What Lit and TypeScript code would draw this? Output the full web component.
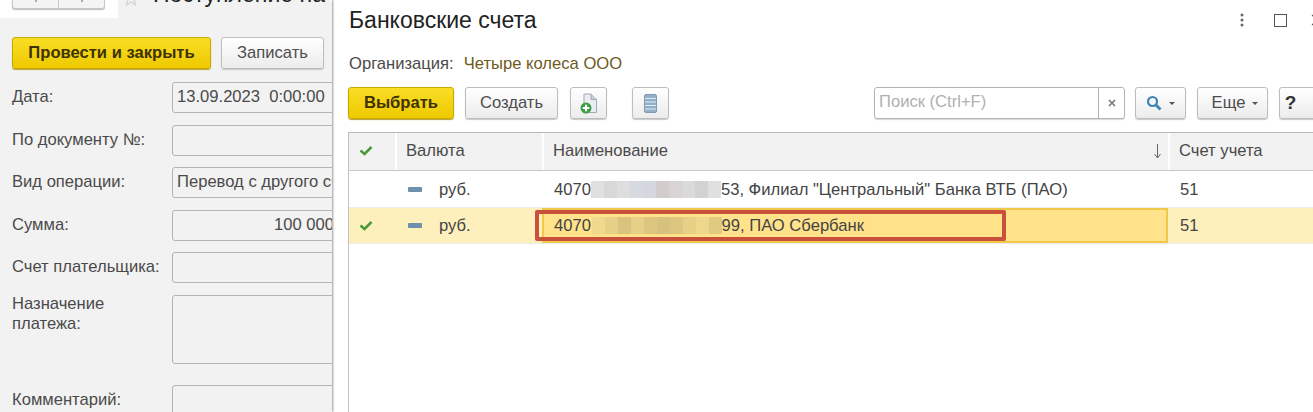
import { LitElement, html, css } from "lit";
import { customElement } from "lit/decorators.js";

const check = (color: string) => html`<svg width="14" height="11" viewBox="0 0 14 11"><path d="M1.5 5.5 L5.5 9 L12.5 2" fill="none" stroke=${color} stroke-width="2.6"/></svg>`;
const dash = html`<span class="dash"></span>`;

const blurOne = ["#e0e0e0", "#d8d8d8", "#dedede", "#d6dae0", "#d4d8de", "#d2cccc", "#d8d4d4", "#dadada", "#d2d2d2", "#e0e0e0"];
const blurTwo = ["#f0d88c", "#e6d088", "#d8c47e", "#e6cf86", "#dcc680", "#d6c27c", "#dcc680", "#e6d086", "#eed68a", "#e0ca82"];

@customElement("app-root")
export class AppRoot extends LitElement {
  static styles = css`
    :host {
      display: block;
      height: 412px;
      width: 1313px;
      overflow: hidden;
      font-family: "Liberation Sans", Arial, sans-serif;
      font-size: 16.6px;
      color: #4a4a4a;
    }
    .page { display: flex; height: 412px; }

    .left {
      width: 332px;
      flex: none;
      background: #f2f2f2;
      overflow: hidden;
      position: relative;
      z-index: 1;
      box-shadow: 1px 0 2px #999;
    }
    .doc-top { display: flex; height: 18px; }
    .nav-box { width: 118px; height: 18px; background: #fff; padding-left: 12px; box-sizing: border-box; flex: none; }
    .nav {
      width: 91px; height: 8px; display: flex;
      border: 1px solid #c8c8c8; border-top: none; border-radius: 0 0 3px 3px;
      background: #f4f4f4; box-shadow: 0 1px 1px #bbb;
    }
    .nav span { flex: 1; display: flex; justify-content: center; }
    .nav span + span { border-left: 1px solid #c8c8c8; }
    .nav i { width: 2px; height: 2px; background: #aaa; }
    .star { margin: -10px 0 0 5px; flex: none; }
    .doc-title {
      font-size: 23px; line-height: 24px; color: #222; white-space: nowrap;
      margin: -18px 0 0 14px;
    }
    .doc-actions { display: flex; gap: 10px; padding: 19px 0 0 12px; }

    .btn {
      box-sizing: border-box; height: 32px; display: flex; align-items: center; justify-content: center;
      border: 1px solid #bdbdbd; border-radius: 3px; color: #4d4d4d; flex: none;
      background: linear-gradient(#fff, #ececec); box-shadow: 0 1px 1px #c8c8c8;
    }
    .primary {
      background: linear-gradient(#f9de26, #eec900); border-color: #c9a900; color: #3d3300;
      font-weight: 700; box-shadow: 0 1px 1px #b8a030;
    }

    .form {
      display: grid; grid-template-columns: 160px 1fr; row-gap: 11.5px;
      padding: 13px 0 0 12px;
    }
    .label { line-height: 29px; white-space: nowrap; }
    .label.multi { line-height: 20px; margin-top: -1px; }
    .field {
      box-sizing: border-box; height: 31px; width: 190px; border: 1px solid #b4b4b4; border-radius: 3px;
      padding: 0 4px; line-height: 27px; white-space: nowrap; overflow: hidden; background: #f2f2f2;
    }
    .field.tall { height: 69px; margin-bottom: 10px; }
    .field.num { padding-left: 101px; }

    .right { flex: 1; background: #fff; position: relative; min-width: 0; }
    .head { display: flex; align-items: center; height: 40px; padding-left: 17px; }
    .title { font-size: 23px; color: #222; flex: 1; }
    .win { display: flex; align-items: center; width: 73px; flex: none; }
    .win svg { flex: none; }
    .org { display: flex; gap: 10px; padding: 14px 0 0 17px; height: 47px; box-sizing: border-box; line-height: 19px; }
    .org b { font-weight: 400; color: #6f5a1c; }

    .toolbar { display: flex; padding-left: 16px; height: 32px; width: 1000px; }
    .search {
      width: 251px; height: 32px; box-sizing: border-box; margin-left: 205px; display: flex; flex: none;
      border: 1px solid #b4b4b4; border-radius: 3px; box-shadow: 0 1px 1px #d8d8d8;
    }
    .search .hint { flex: 1; color: #b0b0b0; padding-left: 4px; line-height: 28px; }
    .search .clear { width: 25px; border-left: 1px solid #b4b4b4; display: flex; align-items: center; justify-content: center; }
    .caret { width: 0; height: 0; border: 3px solid transparent; border-top-color: #555; border-bottom: none; margin-left: 7px; }

    .table { margin: 13px 0 0 16px; border-left: 1px solid #c2c2c2; height: 300px; }
    .row { display: grid; grid-template-columns: 46px 147px 626px 1fr; box-sizing: border-box; }
    .row > div { display: flex; align-items: center; box-sizing: border-box; padding-left: 12px; }
    .row > .mark-col { padding-left: 10px; }
    .hdr { height: 39px; background: #f2f2f2; border-top: 1px solid #b9b9b9; border-bottom: 1px solid #c8c8c8; }
    .hdr > div { padding-bottom: 2px; }
    .hdr > div + div { border-left: 2px solid #fff; padding-left: 9px; }
    .hdr .sort { justify-content: space-between; padding-right: 6px; }
    .data { height: 37px; border-bottom: 1px solid #ececec; color: #444; }
    .data.first > div { padding-top: 1px; }
    .data.sel { background: #fdf0bc; height: 36px; }
    .data .cur { padding-left: 13px; gap: 17px; }
    .data .cell-sel { background: #ffe28a; border: 2px solid #f0c84a; padding-left: 10px; }
    .dash { width: 14px; height: 5px; background: #6d90ad; border-radius: 1px; display: block; }
    .blur { display: flex; height: 17px; width: 130px; flex: none; }
    .blur.short { width: 130px; margin-left: -4px; }
    .blur i { flex: 1; }
    .acct { white-space: pre; }

    .mark {
      position: absolute; left: 203px; top: 210px; width: 471px; height: 31px;
      box-sizing: border-box; border: 4px solid #c9503a; border-radius: 2px; pointer-events: none;
    }
  `;

  private blur(colors: string[], cls = "") {
    return html`<span class="blur ${cls}">${colors.map((c) => html`<i style="background:${c}"></i>`)}</span>`;
  }

  render() {
    return html`
      <div class="page">
        <section class="left">
          <div class="doc-top">
            <div class="nav-box"><div class="nav"><span><i></i></span><span><i></i></span></div></div>
            <svg class="star" width="16" height="16" viewBox="0 0 16 16"><path d="M8 1 L10 6 L15 6.4 L11.2 9.6 L12.4 15 L8 12 L3.6 15 L4.8 9.6 L1 6.4 L6 6 Z" fill="none" stroke="#d6d6d6" stroke-width="1.4"/></svg>
            <div class="doc-title">Поступление на</div>
          </div>
          <div class="doc-actions">
            <div class="btn primary" style="width:199px">Провести и закрыть</div>
            <div class="btn" style="width:103px">Записать</div>
          </div>
          <div class="form">
            <div class="label">Дата:</div><div class="field">13.09.2023&nbsp; 0:00:00</div>
            <div class="label">По документу №:</div><div class="field"></div>
            <div class="label">Вид операции:</div><div class="field">Перевод с другого счета</div>
            <div class="label">Сумма:</div><div class="field num">100 000,00</div>
            <div class="label">Счет плательщика:</div><div class="field"></div>
            <div class="label multi">Назначение<br />платежа:</div><div class="field tall"></div>
            <div class="label">Комментарий:</div><div class="field"></div>
          </div>
        </section>

        <section class="right">
          <div class="head">
            <div class="title">Банковские счета</div>
            <div class="win">
              <svg width="4" height="14" viewBox="0 0 4 14" fill="#666"><circle cx="2" cy="2" r="1.5"/><circle cx="2" cy="7" r="1.5"/><circle cx="2" cy="12" r="1.5"/></svg>
              <svg style="margin-left:30px" width="13" height="13" viewBox="0 0 13 13"><rect x=".5" y=".5" width="12" height="12" fill="none" stroke="#555"/></svg>
              <svg style="margin-left:24px" width="12" height="12" viewBox="0 0 12 12"><path d="M1 1 L11 11 M11 1 L1 11" stroke="#555" stroke-width="1.1"/></svg>
            </div>
          </div>
          <div class="org"><span>Организация:</span><b>Четыре колеса ООО</b></div>
          <div class="toolbar">
            <div class="btn primary" style="width:106px">Выбрать</div>
            <div class="btn" style="width:93px;margin-left:11px">Создать</div>
            <div class="btn" style="width:37px;margin-left:12px">
              <svg width="18" height="21" viewBox="0 0 18 21"><path d="M4 1 H11 L16.5 6.5 V19.5 H4 Z" fill="#e9edf0" stroke="#a0aab4"/><path d="M11 1 V6.5 H16.5" fill="#c6ced6" stroke="#a0aab4"/><circle cx="6" cy="15" r="5.5" fill="#3f9f45"/><path d="M6 11.7 V18.3 M2.7 15 H9.3" stroke="#fff" stroke-width="2"/></svg>
            </div>
            <div class="btn" style="width:37px;margin-left:25px">
              <svg width="13" height="19" viewBox="0 0 13 19"><rect x=".5" y=".5" width="12" height="18" rx="1.5" fill="#93b0ca" stroke="#7f9ab4"/><path d="M1 4.5 H12 M1 8 H12 M1 11.5 H12 M1 15 H12" stroke="#e2e9f0" stroke-width="1"/></svg>
            </div>
            <div class="search">
              <div class="hint">Поиск (Ctrl+F)</div>
              <div class="clear"><svg width="8" height="8" viewBox="0 0 8 8"><path d="M1 1 L7 7 M7 1 L1 7" stroke="#777" stroke-width="1.6"/></svg></div>
            </div>
            <div class="btn" style="width:51px;margin-left:10px">
              <svg width="16" height="16" viewBox="0 0 16 16"><circle cx="6.5" cy="6.5" r="4.5" fill="none" stroke="#3c84b4" stroke-width="2.2"/><path d="M10 10 L14.5 14.5" stroke="#3c84b4" stroke-width="2.8"/></svg>
              <span class="caret"></span>
            </div>
            <div class="btn" style="width:71px;margin-left:11px;padding-left:5px">Еще<span class="caret"></span></div>
            <div class="btn" style="width:41px;margin-left:11px;font-weight:700;font-size:19px;color:#333;padding-right:18px">?</div>
          </div>
          <div class="table">
            <div class="row hdr">
              <div class="mark-col">${check("#4c9a3c")}</div>
              <div>Валюта</div>
              <div class="sort">Наименование<svg width="9" height="16" viewBox="0 0 9 16"><path d="M4.5 1 V14 M1.5 11 L4.5 15 L7.5 11" fill="none" stroke="#666"/></svg></div>
              <div>Счет учета</div>
            </div>
            <div class="row data first">
              <div></div>
              <div class="cur">${dash}<span>руб.</span></div>
              <div><span>4070</span>${this.blur(blurOne)}<span class="acct">53, Филиал "Центральный" Банка ВТБ (ПАО)</span></div>
              <div>51</div>
            </div>
            <div class="row data sel">
              <div class="mark-col">${check("#4c9a3c")}</div>
              <div class="cur">${dash}<span>руб.</span></div>
              <div class="cell-sel"><span>4070:</span>${this.blur(blurTwo, "short")}<span class="acct">99, ПАО Сбербанк</span></div>
              <div>51</div>
            </div>
          </div>
          <div class="mark"></div>
        </section>
      </div>
    `;
  }
}
